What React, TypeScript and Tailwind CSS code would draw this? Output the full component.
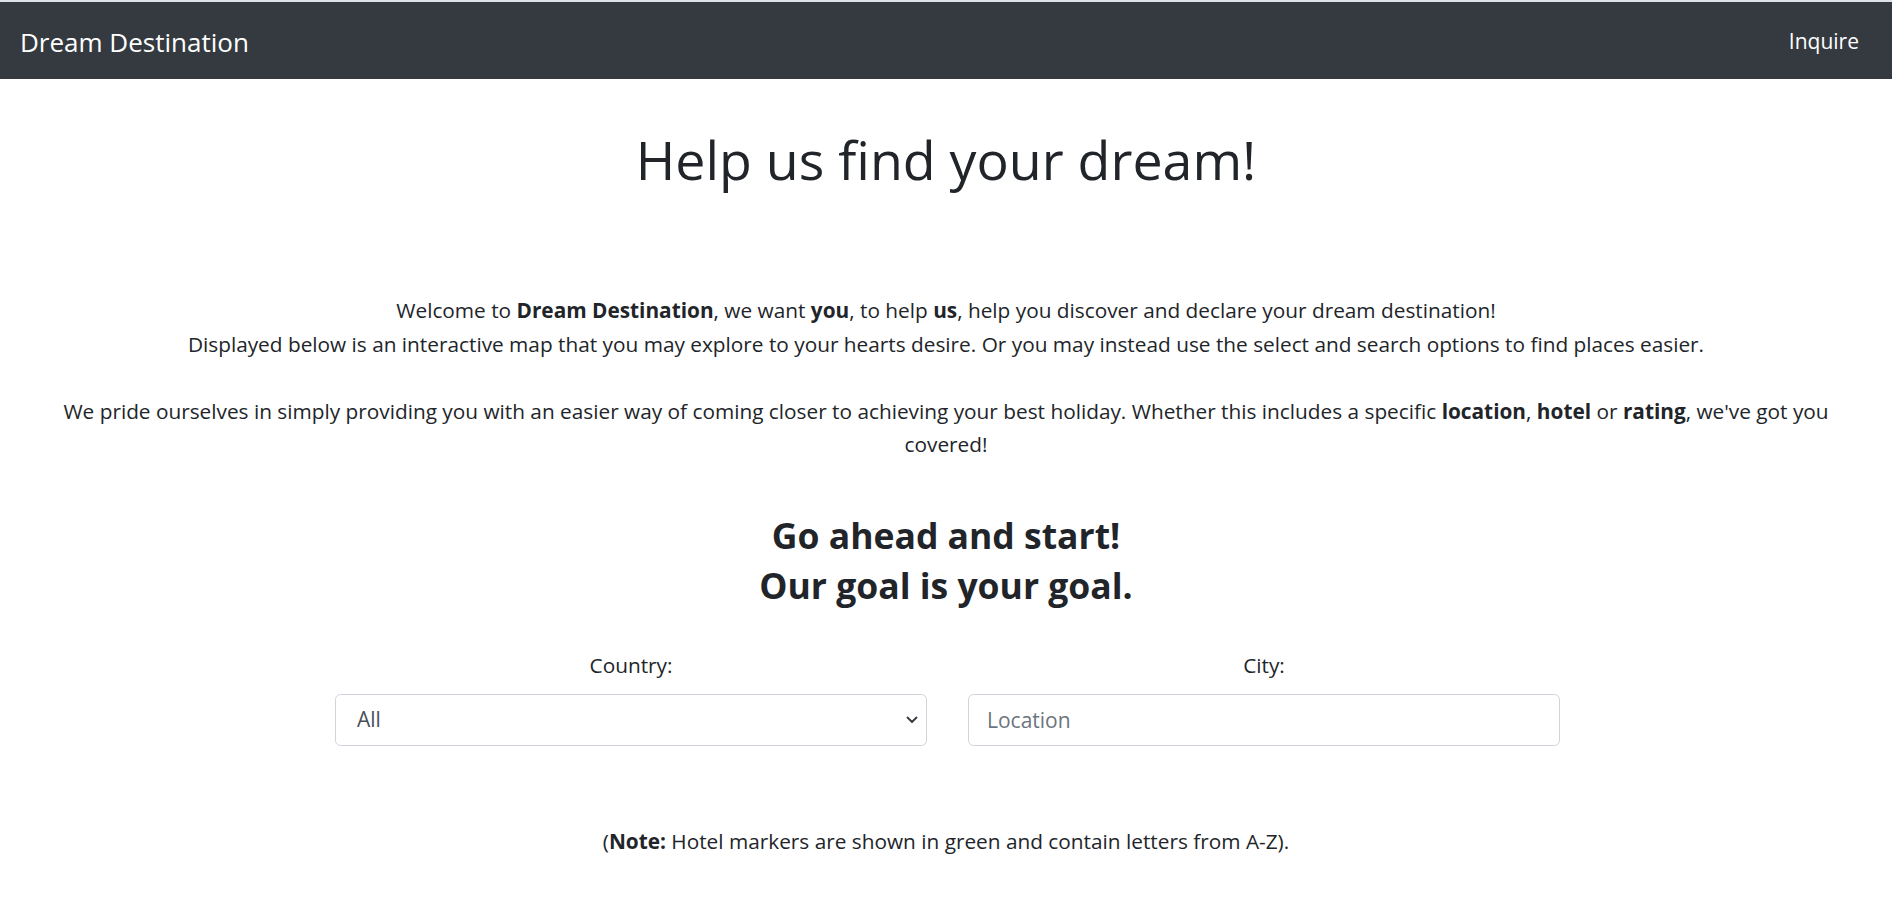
export default function App() {
  return (
    <div className="min-h-screen bg-white font-['Open_Sans',sans-serif] text-[#212529]">
      <div className="h-[2px] bg-[#dee2e6]" />
      <nav className="flex h-[77px] items-center justify-between bg-[#343a40] pl-[20px] pr-[22px]">
        <a href="#" className="pt-[3px] text-[26px] leading-[42px] text-white">
          Dream Destination
        </a>
        <a href="#" className="px-[11px] pt-[1px] text-[21px] leading-[34px] text-white">
          Inquire
        </a>
      </nav>
      <main className="px-[21px] text-center">
        <h1 className="mt-[47px] text-[53.7px] font-normal leading-[67px]">Help us find your dream!</h1>
        <p className="mt-[101px] text-[20.8px] leading-[33.6px]">
          Welcome to <b className="font-bold">Dream Destination</b>, we want <b className="font-bold">you</b>, to help{" "}
          <b className="font-bold">us</b>, help you discover and declare your dream destination!
          <br />
          Displayed below is an interactive map that you may explore to your hearts desire. Or you may instead use the
          select and search options to find places easier.
          <br />
          <br />
          We pride ourselves in simply providing you with an easier way of coming closer to achieving your best holiday.
          Whether this includes a specific <b className="font-bold">location</b>, <b className="font-bold">hotel</b> or{" "}
          <b className="font-bold">rating</b>, we've got you
          <br />
          covered!
        </p>
        <h3 className="mt-[48px] text-[35.5px] font-bold leading-[50px]">
          Go ahead and start!
          <br />
          Our goal is your goal.
        </h3>
        <div className="mt-[39px] flex justify-center gap-[41px] pl-[3px]">
          <div className="w-[592px]">
            <label className="mb-[11px] block text-[20.8px] leading-[33.6px]">Country:</label>
            <div className="relative">
              <select className="h-[52px] w-full appearance-none rounded-[5.6px] border border-[#ced4da] bg-white px-[21px] text-[21px] text-[#495057] outline-none">
                <option>All</option>
              </select>
              <svg
                className="pointer-events-none absolute right-[9px] top-1/2 -translate-y-1/2"
                width="12"
                height="8"
                viewBox="0 0 12 8"
                fill="none"
              >
                <path d="M1.5 1.5 L6 6 L10.5 1.5" stroke="#343a40" strokeWidth="1.8" strokeLinecap="round" strokeLinejoin="round" />
              </svg>
            </div>
          </div>
          <div className="w-[592px]">
            <label className="mb-[11px] block text-[20.8px] leading-[33.6px]">City:</label>
            <input
              type="text"
              placeholder="Location"
              className="h-[52px] w-full rounded-[5.6px] border border-[#ced4da] bg-white px-[18px] text-[21px] text-[#495057] outline-none placeholder:text-[#6c757d]"
            />
          </div>
        </div>
        <p className="mt-[79px] text-[20.8px] leading-[33.6px]">
          (<b className="font-bold">Note:</b> Hotel markers are shown in green and contain letters from A-Z).
        </p>
      </main>
    </div>
  );
}
